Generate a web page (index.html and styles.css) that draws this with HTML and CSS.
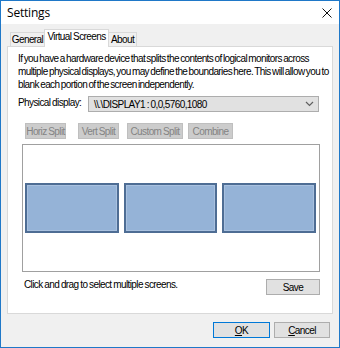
FILE: index.html
```html
<!DOCTYPE html>
<html>
<head>
<meta charset="utf-8">
<link rel="stylesheet" href="styles.css">
</head>
<body>
<div class="window">
  <div class="titlebar">
    <span class="title">Settings</span>
    <svg class="close" width="10" height="10" viewBox="0 0 10 10"><path d="M0.5 0.5 L9.5 9.5 M9.5 0.5 L0.5 9.5" stroke="#111" stroke-width="1" fill="none"/></svg>
  </div>
  <div class="client">
    <div class="tabs">
      <div class="tab t1">General</div>
      <div class="tab active">Virtual Screens</div>
      <div class="tab t3">About</div>
    </div>
    <div class="panel">
      <p class="intro">If you have a hardware device that splits the contents of logical monitors across<br>multiple physical displays, you may define the boundaries here. This will allow you to<br>blank each portion of the screen independently.</p>
      <div class="display-row">
        <span class="label">Physical display:</span>
        <div class="select">
          <span>\\.\DISPLAY1 : 0,0,5760,1080</span>
          <svg width="9" height="6" viewBox="0 0 9 6"><path d="M1 1 L4.5 4.5 L8 1" stroke="#606060" stroke-width="1.2" fill="none"/></svg>
        </div>
      </div>
      <div class="split-row">
        <div class="btn disabled b1">Horiz Split</div>
        <div class="btn disabled b2">Vert Split</div>
        <div class="btn disabled b3">Custom Split</div>
        <div class="btn disabled b4">Combine</div>
      </div>
      <div class="canvas">
        <div class="screens">
          <div class="screen"></div>
          <div class="screen"></div>
          <div class="screen"></div>
        </div>
      </div>
      <div class="footer-row">
        <span class="hint">Click and drag to select multiple screens.</span>
        <div class="btn save">Save</div>
      </div>
    </div>
    <div class="dialog-buttons">
      <div class="btn ok"><u>O</u>K</div>
      <div class="btn cancel"><u>C</u>ancel</div>
    </div>
  </div>
</div>
</body>
</html>
```

FILE: styles.css
```css
* { box-sizing: border-box; }
html, body { margin: 0; padding: 0; }
body {
  width: 340px;
  height: 348px;
  font-family: "Liberation Sans", Arial, sans-serif;
  font-size: 10px;
  letter-spacing: -0.6px;
  word-spacing: -0.5px;
  color: #000;
  background: #f0f0f0;
}
.window {
  width: 340px;
  height: 348px;
  border: 1px solid #1f78c8;
  display: flex;
  flex-direction: column;
  background: #f0f0f0;
}
.titlebar {
  height: 23px;
  background: #fff;
  display: flex;
  align-items: center;
  justify-content: space-between;
  padding: 0 7px 0 6px;
  flex: none;
}
.title {
  font-family: "Open Sans", "Liberation Sans", sans-serif;
  font-size: 12px;
  letter-spacing: -0.2px;
  word-spacing: 0;
  color: #000;
}
.client {
  flex: 1;
  display: flex;
  flex-direction: column;
  padding: 5px 6px 0 6px;
}
.tabs {
  display: flex;
  align-items: flex-end;
  height: 17px;
  padding-left: 3px;
  position: relative;
  z-index: 1;
}
.tab {
  height: 14px;
  border: 1px solid #d9d9d9;
  border-bottom: none;
  background: #f0f0f0;
  line-height: 14px;
  white-space: nowrap;
  text-align: center;
  margin-right: -1px;
}
.t1 { width: 35px; }
.t3 { width: 29px; }
.tab.active {
  width: 65px;
  height: 18px;
  background: #fff;
  margin-bottom: -1px;
  line-height: 14px;
}
.panel {
  height: 268px;
  background: #fff;
  border: 1px solid #d9d9d9;
  padding: 5px 10px 0 10px;
  display: flex;
  flex-direction: column;
}
.intro {
  margin: 0;
  line-height: 13px;
  white-space: nowrap;
  word-spacing: -0.9px;
}
.display-row {
  display: flex;
  align-items: center;
  margin-top: 5px;
  height: 16px;
}
.label { width: 70px; flex: none; margin-top: -3px; white-space: nowrap; }
.select {
  width: 231px;
  height: 16px;
  border: 1px solid #adadad;
  background: #e1e1e1;
  display: flex;
  align-items: center;
  justify-content: space-between;
  padding: 0 4px 0 5px;
  white-space: nowrap;
}
.split-row {
  display: flex;
  margin-top: 11px;
  padding-left: 7px;
  height: 16px;
}
.btn {
  height: 16px;
  display: flex;
  align-items: center;
  justify-content: center;
  border: 1px solid #adadad;
  background: #e1e1e1;
  white-space: nowrap;
}
.btn.disabled {
  background: #cccccc;
  border-color: #bfbfbf;
  color: #838383;
}
.b1 { width: 41px; }
.b2 { width: 41px; margin-left: 12px; }
.b3 { width: 56px; margin-left: 8px; }
.b4 { width: 45px; margin-left: 5px; }
.canvas {
  margin-top: 5px;
  margin-left: 4px;
  width: 298px;
  height: 128px;
  border: 1px solid #a0a0a0;
  background: #fff;
  padding: 38px 3px 0 2px;
}
.screens {
  display: flex;
  gap: 5px;
}
.screen {
  width: 94px;
  height: 50px;
  background: #95b3d7;
  border: 2px solid #4e6d94;
  box-shadow: inset 0 0 0 1px #a9c1df;
}
.footer-row {
  display: flex;
  justify-content: space-between;
  margin-top: 7px;
  padding-left: 6px;
  padding-right: 2px;
}
.hint { margin-top: 0; white-space: nowrap; }
.save { width: 54px; }
.dialog-buttons {
  display: flex;
  justify-content: flex-end;
  margin-top: 8px;
  gap: 4px;
  padding-right: 3px;
}
.ok { width: 57px; border-color: #0078d7; }
.cancel { width: 56px; }
u { text-decoration: underline; }
```
